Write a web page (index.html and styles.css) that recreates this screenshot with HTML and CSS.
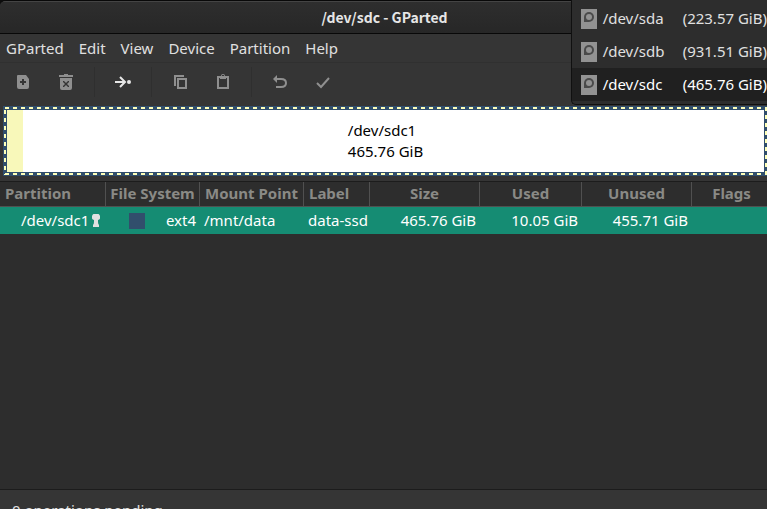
FILE: index.html
```html
<!DOCTYPE html>
<html lang="en">
<head>
<meta charset="utf-8">
<title>/dev/sdc - GParted</title>
<link rel="stylesheet" href="styles.css">
</head>
<body>
<div class="window">
  <header class="titlebar"><h1>/dev/sdc - GParted</h1></header>
  <nav class="menubar">
    <button>GParted</button>
    <button>Edit</button>
    <button>View</button>
    <button>Device</button>
    <button>Partition</button>
    <button>Help</button>
  </nav>
  <div class="toolbar">
    <div class="group group-first">
      <button aria-label="New partition"><svg viewBox="0 0 16 16"><path fill-rule="evenodd" d="M3 1h8l3 4v8q0 2-2 2H4q-2 0-2-2V2q0-1 1-1zM7 5v2H5v2h2v2h2V9h2V7H9V5z"/></svg></button>
      <button aria-label="Delete"><svg viewBox="0 0 16 16"><path fill-rule="evenodd" d="M1 1h5V0h4v1h5v2H1zM2 4h12v10q0 2-2 2H4q-2 0-2-2zM5 7v1l2 2-2 2v1h1l2-2 2 2h1v-1L9 10l2-2V7h-1L8 9 6 7z"/></svg></button>
    </div>
    <div class="group">
      <button class="active" aria-label="Resize or move"><svg viewBox="0 0 16 16"><path class="line" d="M0 8h10M5 3l5 5-5 5"/><circle cx="14" cy="8" r="2"/></svg></button>
    </div>
    <div class="group">
      <button aria-label="Copy"><svg viewBox="0 0 16 16"><path class="line" d="M3 12V2h9M6 5h8v9H6z"/></svg></button>
      <button aria-label="Paste"><svg viewBox="0 0 16 16"><path class="line" d="M3 3h10v11H3z"/><path fill-rule="evenodd" d="M5 2h1q0-2 2-2t2 2h1v3H5zM7 1v2h2V1z"/></svg></button>
    </div>
    <div class="group">
      <button aria-label="Undo"><svg viewBox="0 0 16 16"><path class="line" d="M4 5h5q5 0 5 4t-5 4H4"/><path d="M1 5l4-4v8z"/></svg></button>
      <button aria-label="Apply"><svg viewBox="0 0 16 16"><path class="line" d="M2 9l4 4 8-9"/></svg></button>
    </div>
  </div>

  <section class="disk">
    <div class="dashes">
      <div class="partition">
        <div class="used"></div>
        <p>/dev/sdc1<br>465.76 GiB</p>
      </div>
    </div>
  </section>

  <main class="list">
    <table>
      <colgroup>
        <col class="c-partition"><col class="c-fs"><col class="c-mount"><col class="c-label"><col class="c-size"><col class="c-used"><col class="c-unused"><col>
      </colgroup>
      <thead>
        <tr><th class="left">Partition</th><th>File System</th><th>Mount Point</th><th class="left">Label</th><th>Size</th><th>Used</th><th>Unused</th><th>Flags</th></tr>
      </thead>
      <tbody>
        <tr>
          <td><div class="name">/dev/sdc1<svg viewBox="0 0 8 14"><path d="M4 0a3 3 0 0 1 2 6v2q0 2 1 3v2H1v-2q1-1 1-3V6a3 3 0 0 1 2-6z"/></svg></div></td>
          <td><div class="fs"><span class="swatch"></span>ext4</div></td>
          <td>/mnt/data</td>
          <td>data-ssd</td>
          <td class="num">465.76 GiB</td>
          <td class="num">10.05 GiB</td>
          <td class="num">455.71 GiB</td>
          <td></td>
        </tr>
      </tbody>
    </table>
  </main>
  <footer class="status">0 operations pending</footer>
</div>

<div class="devices">
  <button><svg viewBox="0 0 16 20"><path class="case" d="M0 0h16v20H0z"/><path class="platter" d="M3 13V8a5 5 0 1 1 5 5z"/><circle class="case" cx="8" cy="8" r="3"/></svg><span>/dev/sda</span><span>(223.57 GiB)</span></button>
  <button><svg viewBox="0 0 16 20"><path class="case" d="M0 0h16v20H0z"/><path class="platter" d="M3 13V8a5 5 0 1 1 5 5z"/><circle class="case" cx="8" cy="8" r="3"/></svg><span>/dev/sdb</span><span>(931.51 GiB)</span></button>
  <button class="selected"><svg viewBox="0 0 16 20"><path class="case" d="M0 0h16v20H0z"/><path class="platter" d="M3 13V8a5 5 0 1 1 5 5z"/><circle class="case" cx="8" cy="8" r="3"/></svg><span>/dev/sdc</span><span>(465.76 GiB)</span></button>
</div>
</body>
</html>
```
FILE: styles.css
```css
* { box-sizing: border-box; }

body {
  margin: 0;
  overflow: hidden;
  background: #0c0c0c;
  color: #e0e0e0;
  font: 15px/21px "Noto Sans", sans-serif;
}

button {
  padding: 0;
  border: 0;
  background: none;
  color: inherit;
  font: inherit;
}

.window {
  display: flex;
  flex-direction: column;
  height: 100vh;
  overflow: hidden;
  border-top: 1px solid #080808;
  border-top-left-radius: 6px;
  background: #353535;
}

.titlebar {
  flex: none;
  height: 33px;
  border-top: 1px solid #444444;
  border-bottom: 1px solid #080808;
  background: linear-gradient(#2e2e2e, #272727);
}

.titlebar h1 {
  margin: 0;
  padding-left: 2px;
  text-align: center;
  color: #e6e6e6;
  font: bold 14px/30px "Noto Sans CJK SC", "Noto Sans", sans-serif;
}

.menubar {
  display: flex;
  flex: none;
  gap: 15px;
  height: 29px;
  padding: 0 6px;
  border-bottom: 1px solid #303030;
}

.toolbar {
  display: flex;
  flex: none;
  height: 43px;
  padding: 4px 0 9px;
}

.group {
  display: flex;
  align-items: center;
  gap: 27px;
  padding: 0 20px;
  border-right: 1px solid #2f2f2f;
}

.group-first { padding-left: 15px; }
.group:last-child { border: 0; }

.toolbar button {
  display: flex;
  color: #8f8f8f;
}

.toolbar .active { color: #e6e6e6; }

.toolbar svg {
  width: 16px;
  height: 16px;
  fill: currentColor;
}

.toolbar .line {
  fill: none;
  stroke: currentColor;
  stroke-width: 2;
}

.disk {
  flex: none;
  margin: 0 -1px 5px 3px;
  padding: 1px;
  background: #314e6c;
}

.dashes {
  padding: 3px;
  background:
    repeating-linear-gradient(90deg, #ffffb8 0 4px, transparent 4px 8px) 1px 0 / 100% 2px no-repeat,
    repeating-linear-gradient(90deg, #ffffb8 0 4px, transparent 4px 8px) 1px 100% / 100% 2px no-repeat,
    repeating-linear-gradient(#ffffb8 0 4px, transparent 4px 8px) 0 3px / 2px 100% no-repeat,
    repeating-linear-gradient(#ffffb8 0 4px, transparent 4px 8px) 100% 0 / 2px 100% no-repeat;
}

.partition {
  display: grid;
  height: 62px;
  background: #ffffff;
  color: #000000;
}

.partition > * { grid-area: 1 / 1; }

.used {
  width: 16px;
  background: #f8f8ba;
}

.partition p {
  margin: 0;
  place-self: center;
}

.list {
  flex: 1;
  min-height: 0;
  border-top: 1px solid #1c1c1c;
  border-bottom: 1px solid #1c1c1c;
  background: #2d2d2d;
}

table {
  width: 100%;
  table-layout: fixed;
  border-collapse: separate;
  border-spacing: 0;
}

.c-partition { width: 106px; }
.c-fs { width: 94px; }
.c-mount { width: 104px; }
.c-label { width: 66px; }
.c-size, .c-unused { width: 110px; }
.c-used { width: 102px; }

th {
  height: 25px;
  padding: 0 0 2px;
  border-right: 1px solid #505050;
  border-bottom: 1px solid #505050;
  color: #8a8a86;
  font-weight: bold;
  white-space: nowrap;
}

th.left { padding-left: 5px; text-align: left; }

th:last-child {
  padding-left: 4px;
  border-right: 0;
}

td {
  height: 27px;
  padding: 0 4px;
  background: #158c73;
  color: #ffffff;
  white-space: nowrap;
}

.num { text-align: right; }

.name {
  display: flex;
  align-items: center;
  gap: 3px;
  padding-left: 17px;
}

.name svg {
  flex: none;
  width: 8px;
  height: 14px;
  fill: #e0e0e0;
}

.fs {
  display: flex;
  align-items: center;
  justify-content: space-between;
  padding-left: 19px;
}

.swatch {
  width: 16px;
  height: 16px;
  background: #314e6c;
}

.status {
  flex: none;
  height: 19px;
  padding: 10px 12px 0;
}

/* Open device drop-down, hanging over the window's top right corner */
.devices {
  position: absolute;
  top: 0;
  right: 0;
  padding: 2px 0 3px;
  border: 1px solid #101010;
  border-width: 0 0 1px 1px;
  border-bottom-left-radius: 5px;
  background: #2d2d2d;
}

.devices button {
  display: grid;
  grid-template-columns: 16px 74px auto;
  align-items: center;
  column-gap: 6px;
  height: 33px;
  padding-left: 9px;
  text-align: left;
}

.devices .selected {
  background: #202020;
  color: #ffffff;
}

.devices svg {
  width: 16px;
  height: 20px;
}

.case { fill: #929292; }
.platter { fill: #4a4a4a; }
```
